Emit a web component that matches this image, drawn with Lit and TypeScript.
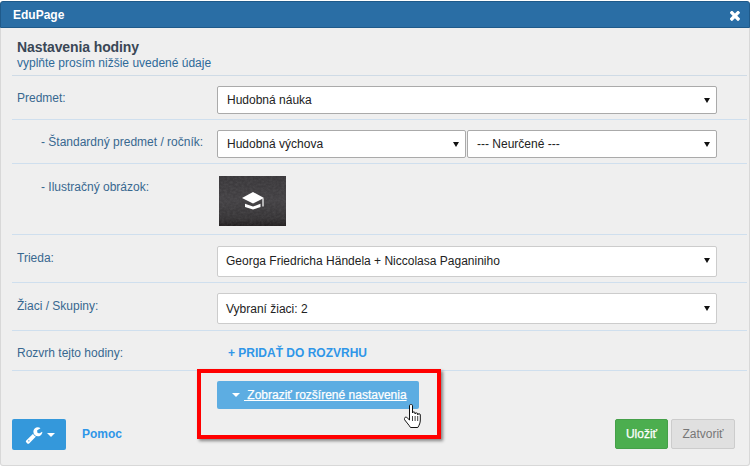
import { LitElement, html, css } from "lit";
import { customElement } from "lit/decorators.js";

const caret = html`<span class="caret"></span>`;

@customElement("app-root")
export class AppRoot extends LitElement {
  static styles = css`
    :host { display: block; width: 751px; height: 467px; overflow: hidden; background: #fff; font-family: "Liberation Sans", Arial, sans-serif; font-size: 12px; color: #333; }
    * { box-sizing: border-box; }
    .dialog { position: relative; margin-top: 1px; width: 750px; height: 465px; background: #efefef; border: 1px solid #d8d8d8; border-top: 0; border-radius: 3px; display: flex; flex-direction: column; }
    .titlebar { height: 27px; margin: 0 -1px; background: #2a6ea5; border: 1px solid #1f5a8a; border-radius: 3px 3px 0 0; color: #fff; font-weight: bold; font-size: 12px; display: flex; align-items: center; justify-content: space-between; padding: 0 9px 0 12px; flex: none; }
    .titlebar svg { width: 10px; height: 10px; fill: #fff; display: block; margin-top: 2px; }
    .content { padding: 11px 2px 0 11px; flex: 1; }
    .heading { height: 36px; border-bottom: 1px solid #cfdbe6; padding-left: 5px; box-sizing: content-box; }
    h1 { margin: 0; font-size: 14px; line-height: 17px; color: #3a4756; font-weight: bold; letter-spacing: -0.1px; }
    .sub { color: #2e6a99; font-size: 12px; line-height: 14px; }
    .row { display: grid; grid-template-columns: 200px 500px; border-bottom: 1px solid #cfdfee; padding-left: 5px; }
    .label { color: #38688f; font-size: 12px; }
    .label.sub-label { padding-left: 24px; }
    .r1 { height: 44px; padding-top: 10px; }
    .r1 .label { padding-top: 5px; }
    .r2 { height: 44px; padding-top: 10px; }
    .r2 .label { padding-top: 5px; }
    .r3 { height: 71px; padding-top: 12px; }
    .r3 .label { padding-top: 4px; }
    .r4 { height: 48px; padding-top: 11px; }
    .r4 .label { padding-top: 5px; }
    .r5 { height: 48px; padding-top: 10px; }
    .r5 .label { padding-top: 6px; }
    .r6 { height: 40px; align-items: center; padding-top: 4px; }
    .control { height: 28px; background: #fff; border: 1px solid #aaa; border-radius: 2px; display: flex; align-items: center; justify-content: space-between; padding: 0 6px 0 9px; color: #222; width: 500px; }
    .r4 .control, .r5 .control { height: 31px; border-color: #ccc; padding-left: 8px; }
    .r4 .control { padding-bottom: 2px; }
    .pair { display: flex; gap: 1px; }
    .pair .control:first-child { width: 249px; }
    .pair .control:last-child { width: 250px; }
    .caret { width: 0; height: 0; border-left: 3px solid transparent; border-right: 3px solid transparent; border-top: 5px solid #111; }
    .picture { width: 67px; height: 50px; margin-left: 2px; display: block; }
    .add { color: #2f96e8; font-weight: bold; padding-left: 11px; }
    .more { align-self: flex-start; margin: 10px 0 0 205px; width: 202px; height: 28px; background: #5dade2; border-radius: 2px; color: #fff; display: flex; align-items: center; padding-left: 15px; gap: 4px; -webkit-text-stroke: .25px #fff; }
    .more .tri { border-left: 4px solid transparent; border-right: 4px solid transparent; border-top: 4px solid #fff; width: 0; height: 0; }
    .footer { display: flex; align-items: flex-start; padding: 2px 14px 0 11px; height: 48px; flex: none; }
    .wrench { width: 54px; height: 31px; background: #3498db; border-radius: 2px; display: flex; align-items: center; padding-left: 13px; gap: 4px; margin-right: 16px; }
    .wrench svg { width: 18px; height: 18px; fill: #fff; display: block; }
    .wrench .tri { border-left: 4px solid transparent; border-right: 4px solid transparent; border-top: 4px solid #fff; width: 0; height: 0; }
    .help { color: #2f96e8; font-weight: bold; line-height: 31px; }
    .spacer { flex: 1; }
    .btn { height: 30px; border-radius: 2px; display: flex; align-items: center; justify-content: center; font-size: 12px; }
    .save { width: 53px; background: #4cae4f; border: 1px solid #45a049; color: #fff; margin-right: 3px; -webkit-text-stroke: .25px #fff; }
    .close { width: 64px; background: #e0e0e0; border: 1px solid #ccc; color: #777; }
    .highlight { position: absolute; left: 196px; top: 368px; width: 244px; height: 70px; border: 4px solid #f00; box-shadow: 2px 2px 3px rgba(0,0,0,.45); pointer-events: none; }
    .cursor { position: absolute; left: 403px; top: 403px; width: 18px; height: 24px; }
  `;

  render() {
    return html`
      <div class="dialog">
        <div class="titlebar">
          <span>EduPage</span>
          <svg viewBox="128 320 1170 1170"><path d="M1298 1250q0 40-28 68l-136 136q-28 28-68 28t-68-28l-294-294-294 294q-28 28-68 28t-68-28l-136-136q-28-28-28-68t28-68l294-294-294-294q-28-28-28-68t28-68l136-136q28-28 68-28t68 28l294 294 294-294q28-28 68-28t68 28l136 136q28 28 28 68t-28 68l-294 294 294 294q28 28 28 68z"/></svg>
        </div>
        <div class="content">
          <div class="heading">
            <h1>Nastavenia hodiny</h1>
            <div class="sub">vyplňte prosím nižšie uvedené údaje</div>
          </div>
          <div class="row r1">
            <div class="label">Predmet:</div>
            <div class="control">Hudobná náuka ${caret}</div>
          </div>
          <div class="row r2">
            <div class="label sub-label">- Štandardný predmet / ročník:</div>
            <div class="pair">
              <div class="control">Hudobná výchova ${caret}</div>
              <div class="control">--- Neurčené --- ${caret}</div>
            </div>
          </div>
          <div class="row r3">
            <div class="label sub-label">- Ilustračný obrázok:</div>
            <svg class="picture" viewBox="0 0 67 50">
              <defs>
                <linearGradient id="board" x1="0" y1="0" x2="0" y2="1">
                  <stop offset="0" stop-color="#3a383b"/>
                  <stop offset=".5" stop-color="#434144"/>
                  <stop offset=".85" stop-color="#363436"/>
                  <stop offset="1" stop-color="#231f20"/>
                </linearGradient>
                <filter id="chalk" x="0" y="0" width="100%" height="100%">
                  <feTurbulence type="fractalNoise" baseFrequency=".35 .5" numOctaves="2" seed="4"/>
                  <feColorMatrix values="0 0 0 0 1  0 0 0 0 1  0 0 0 0 1  .5 0 0 0 -.16"/>
                </filter>
              </defs>
              <rect width="67" height="50" fill="url(#board)"/>
              <rect width="67" height="50" filter="url(#chalk)" opacity=".25"/>
              <path d="M34 16 45 22 34 27.500 23 22Z" fill="#fff"/>
              <path d="M26 27.700 34 30.500 41.500 27.700V31L34 33.500 26 31Z" fill="#fff"/>
              <path d="M44 22.500V30.500" stroke="#fff" stroke-width="1.200" fill="none"/>
            </svg>
          </div>
          <div class="row r4">
            <div class="label">Trieda:</div>
            <div class="control">Georga Friedricha Händela + Niccolasa Paganiniho ${caret}</div>
          </div>
          <div class="row r5">
            <div class="label">Žiaci / Skupiny:</div>
            <div class="control">Vybraní žiaci: 2 ${caret}</div>
          </div>
          <div class="row r6">
            <div class="label">Rozvrh tejto hodiny:</div>
            <div class="add">+ PRIDAŤ DO ROZVRHU</div>
          </div>
          <div class="more"><span class="tri"></span><u>&nbsp;Zobraziť rozšírené nastavenia</u></div>
        </div>
        <div class="footer">
          <div class="wrench">
            <svg viewBox="0 0 1792 1792"><path d="M448 1472q0-26-19-45t-45-19-45 19-19 45 19 45 45 19 45-19 19-45zm644-420l-682 682q-37 37-90 37-52 0-91-37l-106-108q-38-36-38-90 0-53 38-91l681-681q39 98 114.500 173.500t173.500 114.500zm634-435q0 39-23 106-47 134-164.500 217.500t-258.500 83.500q-185 0-316.500-131.500t-131.500-316.500 131.500-316.500 316.500-131.500q58 0 121.500 16.500t107.500 46.500q16 11 16 28t-16 28l-293 169v224l193 107q5-3 79-48.500t135.500-81 70.500-35.500q15 0 23.500 10t8.500 25z"/></svg>
            <span class="tri"></span>
          </div>
          <span class="help">Pomoc</span>
          <span class="spacer"></span>
          <div class="btn save">Uložiť</div>
          <div class="btn close">Zatvoriť</div>
        </div>
        <div class="highlight"></div>
        <svg class="cursor" viewBox="0 0 18 24">
          <path d="M5.500 2C5.500-.4 8.500-.4 8.500 2V9c0-1.500 2.600-1.500 2.600 0v1c0-1.500 2.600-1.500 2.600 0v.8c0-1.400 2.600-1.400 2.600 0V16c0 3-1 5-2.500 7.500H6.500C5 21 3 19 .8 16c-1.400-2 .8-3.800 2.400-2.200L5.500 16Z" fill="#fff" stroke="#111" stroke-width="1"/>
          <path d="M8.500 12v5M11.100 12v5M13.700 12v5" stroke="#111" stroke-width=".8" fill="none"/>
        </svg>
      </div>
    `;
  }
}
